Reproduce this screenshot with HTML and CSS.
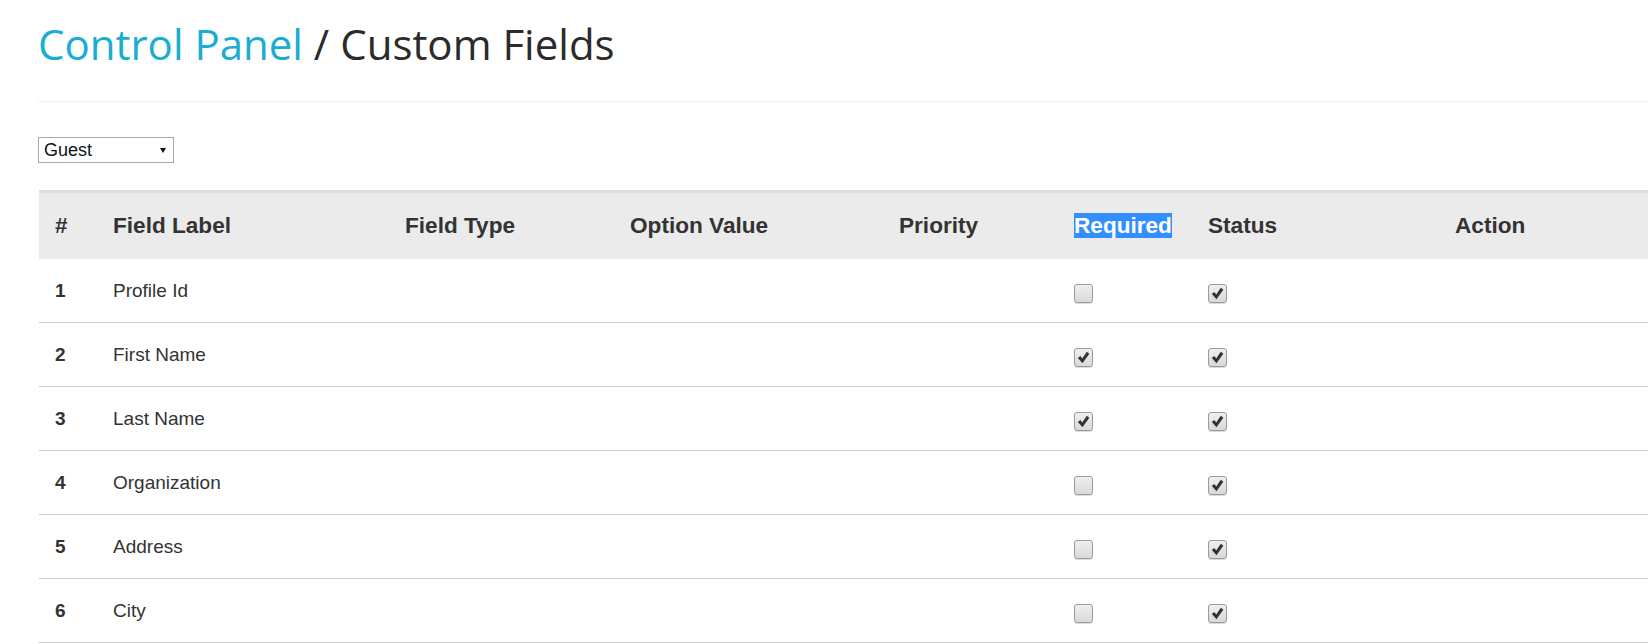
FILE: index.html
```html
<!DOCTYPE html>
<html lang="en">
<head>
<meta charset="utf-8">
<title>Custom Fields</title>
<link rel="stylesheet" href="styles.css">
</head>
<body>
<div class="page">
  <h1 class="title"><span class="crumb">Control Panel</span> / Custom Fields</h1>
  <hr class="rule">
  <div class="select-wrap">
    <select class="type-select">
      <option>Guest</option>
    </select>
  </div>
  <table class="fields">
    <colgroup>
      <col class="c-num"><col class="c-label"><col class="c-type"><col class="c-opt"><col class="c-pri"><col class="c-req"><col class="c-stat"><col class="c-act">
    </colgroup>
    <thead>
      <tr>
        <th>#</th><th>Field Label</th><th>Field Type</th><th>Option Value</th><th>Priority</th><th><span class="sel">Required</span></th><th>Status</th><th>Action</th>
      </tr>
    </thead>
    <tbody>
      <tr><td class="num">1</td><td>Profile Id</td><td></td><td></td><td></td><td><span class="cb"></span></td><td><span class="cb on"><svg viewBox="0 0 18 18"><path d="M3 9.6 L5.6 7.4 L7.7 10.1 L12.5 3 L15.2 5 L7.9 15 Z"/></svg></span></td><td></td></tr>
      <tr><td class="num">2</td><td>First Name</td><td></td><td></td><td></td><td><span class="cb on"><svg viewBox="0 0 18 18"><path d="M3 9.6 L5.6 7.4 L7.7 10.1 L12.5 3 L15.2 5 L7.9 15 Z"/></svg></span></td><td><span class="cb on"><svg viewBox="0 0 18 18"><path d="M3 9.6 L5.6 7.4 L7.7 10.1 L12.5 3 L15.2 5 L7.9 15 Z"/></svg></span></td><td></td></tr>
      <tr><td class="num">3</td><td>Last Name</td><td></td><td></td><td></td><td><span class="cb on"><svg viewBox="0 0 18 18"><path d="M3 9.6 L5.6 7.4 L7.7 10.1 L12.5 3 L15.2 5 L7.9 15 Z"/></svg></span></td><td><span class="cb on"><svg viewBox="0 0 18 18"><path d="M3 9.6 L5.6 7.4 L7.7 10.1 L12.5 3 L15.2 5 L7.9 15 Z"/></svg></span></td><td></td></tr>
      <tr><td class="num">4</td><td>Organization</td><td></td><td></td><td></td><td><span class="cb"></span></td><td><span class="cb on"><svg viewBox="0 0 18 18"><path d="M3 9.6 L5.6 7.4 L7.7 10.1 L12.5 3 L15.2 5 L7.9 15 Z"/></svg></span></td><td></td></tr>
      <tr><td class="num">5</td><td>Address</td><td></td><td></td><td></td><td><span class="cb"></span></td><td><span class="cb on"><svg viewBox="0 0 18 18"><path d="M3 9.6 L5.6 7.4 L7.7 10.1 L12.5 3 L15.2 5 L7.9 15 Z"/></svg></span></td><td></td></tr>
      <tr><td class="num">6</td><td>City</td><td></td><td></td><td></td><td><span class="cb"></span></td><td><span class="cb on"><svg viewBox="0 0 18 18"><path d="M3 9.6 L5.6 7.4 L7.7 10.1 L12.5 3 L15.2 5 L7.9 15 Z"/></svg></span></td><td></td></tr>
    </tbody>
  </table>
</div>
</body>
</html>
```
FILE: styles.css
```css
html, body {
  margin: 0;
  padding: 0;
  overflow: hidden;
  background: #fff;
}
body {
  font-family: "Liberation Sans", Arial, sans-serif;
  color: #333;
}
.page {
  padding-left: 38px;
}
.title {
  margin: 22px 0 0 0;
  font-family: "Open Sans", sans-serif;
  font-weight: 400;
  font-size: 42px;
  line-height: 44px;
  color: #2b2b2b;
}
.crumb {
  color: #19aed1;
}
.rule {
  margin: 35px 0 0 0;
  border: 0;
  border-top: 1px solid #eeeeee;
  height: 0;
}
.select-wrap {
  position: relative;
  width: 136px;
  margin-top: 35px;
}
.select-wrap::after {
  content: "";
  position: absolute;
  right: 8px;
  top: 11px;
  border-left: 3.5px solid transparent;
  border-right: 3.5px solid transparent;
  border-top: 5px solid #111;
  pointer-events: none;
}
.type-select {
  display: block;
  appearance: none;
  -webkit-appearance: none;
  width: 136px;
  height: 26px;
  margin: 0;
  padding: 0 0 0 5px;
  border: 1px solid #a9a9a9;
  border-radius: 0;
  background: #fff;
  font-family: "Liberation Sans", Arial, sans-serif;
  font-size: 18px;
  color: #111;
}
.fields {
  margin-top: 27px;
  margin-left: 1px;
  width: 1700px;
  table-layout: fixed;
  border-collapse: separate;
  border-spacing: 0;
}
.c-num { width: 58px; }
.c-label { width: 292px; }
.c-type { width: 225px; }
.c-opt { width: 269px; }
.c-pri { width: 175px; }
.c-req { width: 134px; }
.c-stat { width: 247px; }
.c-act { width: 300px; }
.fields th {
  text-align: left;
  font-weight: 700;
  font-size: 22.6px;
  color: #333;
  background: #ebebeb;
  border-top: 3px solid #dddddd;
  height: 69px;
  padding: 0 16px;
  vertical-align: middle;
  box-sizing: border-box;
  white-space: nowrap;
}
.sel {
  background: #338fff;
  color: #fff;
}
.fields td {
  font-size: 19px;
  color: #333;
  height: 64px;
  padding: 0 16px;
  border-bottom: 1px solid #cccccc;
  vertical-align: middle;
  box-sizing: border-box;
  white-space: nowrap;
}
.fields td.num {
  font-weight: 700;
}
.cb {
  display: inline-block;
  vertical-align: middle;
  margin-top: 5px;
  width: 19px;
  height: 19px;
  box-sizing: border-box;
  border: 1px solid #9a9a9a;
  border-radius: 3px;
  background: linear-gradient(#f0f0f0, #d8d8d8);
  box-shadow: 0 1px 1px rgba(0, 0, 0, 0.15);
}
.cb svg {
  display: block;
  width: 17px;
  height: 17px;
  fill: #333;
}
```
